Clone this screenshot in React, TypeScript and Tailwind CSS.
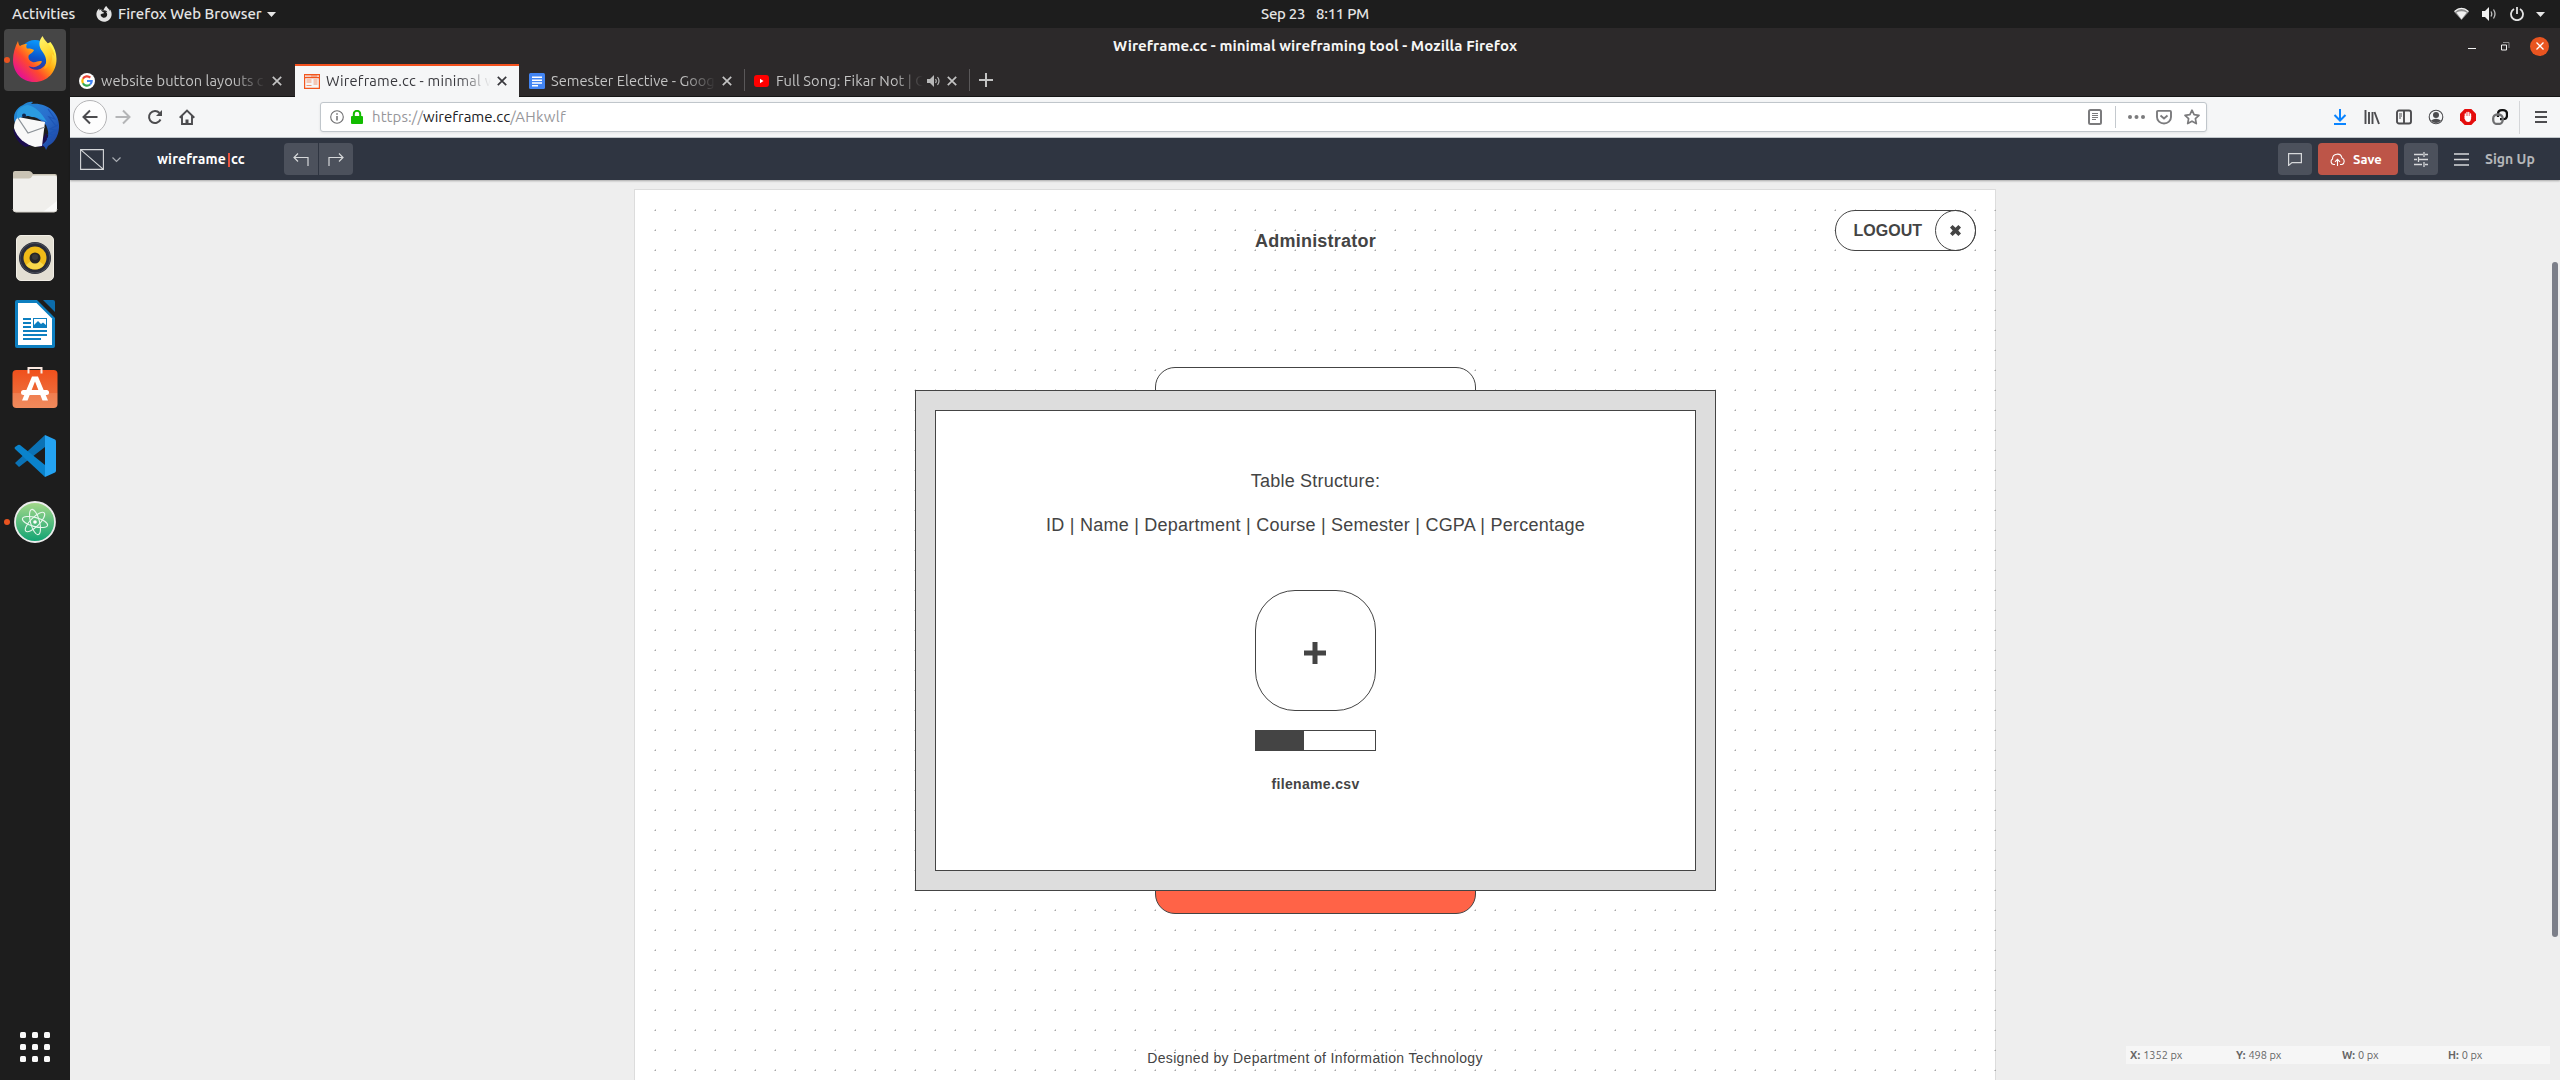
import type { ReactNode } from "react";
import { FaFirefoxBrowser } from "react-icons/fa";

const UI = "font-['Ubuntu','Noto_Sans',sans-serif]";
const ARIAL = "font-['Liberation_Sans',Arial,sans-serif]";

/* ---------- dock icons ---------- */

const FirefoxIcon = () => (
  <svg width="44" height="48" viewBox="0 0 44 48">
    <defs>
      <linearGradient id="ffBody" x1="0.85" y1="0.15" x2="0.15" y2="0.8">
        <stop offset="0" stopColor="#fff44f" />
        <stop offset="0.35" stopColor="#ffa80f" />
        <stop offset="0.65" stopColor="#ff4a2c" />
        <stop offset="1" stopColor="#e8158b" />
      </linearGradient>
      <linearGradient id="ffGlobe" x1="0.6" y1="0" x2="0.4" y2="1">
        <stop offset="0" stopColor="#0a9bff" />
        <stop offset="0.55" stopColor="#0a54c9" />
        <stop offset="1" stopColor="#45278d" />
      </linearGradient>
      <linearGradient id="ffFlame" x1="0.3" y1="0" x2="0.6" y2="1">
        <stop offset="0" stopColor="#fff36b" />
        <stop offset="0.6" stopColor="#ffd52b" />
        <stop offset="1" stopColor="#ff9a12" />
      </linearGradient>
    </defs>
    <circle cx="22" cy="20" r="16" fill="url(#ffGlobe)" />
    <path d="M5 5c.5 3 1 4 2 5 2-1.500 5-2 7-2-1 1.500-1 3 0 4.500 3-.2 6 .5 7 1.500-1 3-5 4-5.500 6-.5 3 1 5 4 6 3 .8 6-1.500 9-1 1 1-1 4-5 5.500-3 1.300-6 .5-8-.5 4 6 15 5 18-4 1.500-5-1-11-4-16l8-4c4 5 6 11 6 17 0 13-9 23-22 23S0 36 0 24C0 17 2 11 5 5z" fill="url(#ffBody)" />
    <path d="M29.500 0c-4 5-4 10-.5 15 4 5 6 11 2 18 6-2 9-8 8-15 1 .5 2 1.500 2.500 3C41 10 33 8 29.500 0z" fill="url(#ffFlame)" />
  </svg>
);

const ThunderbirdIcon = () => (
  <svg width="50" height="50" viewBox="0 0 50 50">
    <defs>
      <linearGradient id="tbBlue" x1="0" y1="0" x2="1" y2="1">
        <stop offset="0" stopColor="#1f8fd6" />
        <stop offset="0.5" stopColor="#2a6fcd" />
        <stop offset="1" stopColor="#1c3f9c" />
      </linearGradient>
    </defs>
    <path d="M3 28q2 12 12 18l8-2-8-12zM36 46l3-8-3-6-8 14z" fill="#1b0d4e" />
    <path d="M13 4C17 1 20 .5 23 1l-2 2c16-2 28 9 28 21 .5 8-3 17-11 21l-2 4c-1-3-2-4-4-5 7-5 8-11 4-20-4-4-9-8-16-9-7 0-12 2-15 7C2 14 6 7 13 4z" fill="url(#tbBlue)" />
    <path d="M4 27C4 23 5 19 8 16l27 5-3 24-7 1C15 43 7 37 4 27z" fill="#f8f8f8" />
    <path d="M8 17l10 15 17-6" fill="none" stroke="#8c9298" strokeWidth="1.300" />
    <path d="M8 18C5 12 8 6 17 4c8 1 14 7 20 17-6-3-10-5-15-5-6-2-10-2-14 2z" fill="#2b9be0" />
    <circle cx="14" cy="14.500" r="2" fill="#10264d" />
    <path d="M48 24l-8 4 6 1-7 4 5 1-7 4M38 8l7 10-6-2 7 9" fill="none" stroke="#1d55b5" strokeWidth="1.200" />
  </svg>
);

const FilesIcon = () => (
  <svg width="46" height="42" viewBox="0 0 46 42">
    <path d="M3 0h14q2 0 3 1.500L21 3h22q2 0 2 2v8H1V2q0-2 2-2z" fill="#c9c3b4" />
    <path d="M1 7.500h16q2 0 3-2l.5-1h22Q45 4.500 45 7v31q0 3-3 3H4q-3 0-3-3z" fill="#f0efec" />
    <path d="M45 30v8q0 3-3 3H31z" fill="#fafaf9" />
    <path d="M1 38q0 3 3 3h38q3 0 3-3" fill="none" stroke="#d5d2ca" />
  </svg>
);

const SpeakerIcon = () => (
  <svg width="38" height="46" viewBox="0 0 38 46">
    <rect x=".5" y=".5" width="37" height="45" rx="4.500" fill="#e3dfd3" stroke="#f1eee6" />
    <circle cx="19" cy="23" r="16" fill="#2a2d38" />
    <circle cx="19" cy="23" r="15" fill="none" stroke="#575b66" strokeWidth=".7" />
    <circle cx="19" cy="23" r="11.500" fill="#f0bb18" />
    <path d="M10 30a11.500 11.500 0 0 0 18 0l-5-4h-8z" fill="#f8d84b" />
    <circle cx="19" cy="23" r="5.500" fill="#262626" />
    <circle cx="19" cy="22" r="3" fill="#3a3a3a" />
  </svg>
);

const WriterIcon = () => (
  <svg width="40" height="48" viewBox="0 0 40 48">
    <path d="M2 0h20l18 18v28q0 2-2 2H2q-2 0-2-2V2Q0 0 2 0z" fill="#0d7fc0" />
    <path d="M28 0h10q2 0 2 2v10z" fill="#0c6cab" />
    <path d="M3 3h18.500L37 18.500V45H3z" fill="#fff" />
    <path d="M8 19h8M8 23h8M8 27h8M8 31h24M8 35h24M8 39h18" stroke="#0d7fc0" strokeWidth="2" />
    <rect x="18.500" y="18.500" width="13" height="9" fill="#fff" stroke="#0d7fc0" />
    <path d="M19 27v-2l4-4 3 3 2-1.500 3 2.500v2z" fill="#0d7fc0" />
  </svg>
);

const SoftwareIcon = () => (
  <svg width="46" height="42" viewBox="0 0 46 42" className="-translate-y-[2.500px]">
    <defs>
      <linearGradient id="swBag" x1="0" y1="0" x2="0" y2="1">
        <stop offset="0" stopColor="#f0501c" />
        <stop offset="0.6" stopColor="#ee6a38" />
        <stop offset="0.62" stopColor="#f07e50" />
        <stop offset="1" stopColor="#f08a5c" />
      </linearGradient>
    </defs>
    <rect x=".5" y="3.500" width="45" height="38" rx="4" fill="url(#swBag)" />
    <path d="M16.500 7V1.500h13V7" fill="none" stroke="#fbe9e0" strokeWidth="2" />
    <path d="M20 10h6l10 24h-5.500L23 15l-7.500 19H10z" fill="#fff" />
    <rect x="9" y="23.500" width="28" height="5" rx="2.500" fill="#fff" />
  </svg>
);

const CodeIcon = () => (
  <svg width="42" height="42" viewBox="0 0 42 42">
    <path d="M1 28l4 4 26-20V0z" fill="#0b72b5" />
    <path d="M1 14q-1-1 0-2l3-2q1-.6 2 0l25 20v12z" fill="#0a83cc" />
    <path d="M31 0l10 4.500q1 .5 1 2v29q0 1.500-1 2L31 42z" fill="#24a3f2" />
  </svg>
);

const AtomIcon = () => (
  <svg width="42" height="42" viewBox="0 0 42 42">
    <defs>
      <linearGradient id="atomBg" x1="0" y1="0" x2="0" y2="1">
        <stop offset="0" stopColor="#a6d98a" />
        <stop offset="1" stopColor="#0fa373" />
      </linearGradient>
    </defs>
    <circle cx="21" cy="21" r="20" fill="url(#atomBg)" stroke="#ececec" strokeWidth="1.800" />
    <g fill="none" stroke="#e9f7ee" strokeWidth="1.100">
      <ellipse cx="21" cy="21" rx="13" ry="4.500" transform="rotate(15 21 21)" />
      <ellipse cx="21" cy="21" rx="13" ry="4.500" transform="rotate(75 21 21)" />
      <ellipse cx="21" cy="21" rx="13" ry="4.500" transform="rotate(135 21 21)" />
    </g>
    <circle cx="21" cy="21" r="1.800" fill="#fff" />
  </svg>
);

/* ---------- small line icons ---------- */

type LineProps = { w?: number; h?: number; vb?: string; sw?: number; className?: string; children: ReactNode };
const Line = ({ w = 16, h = 16, vb = "0 0 16 16", sw = 1.8, className = "", children }: LineProps) => (
  <svg width={w} height={h} viewBox={vb} fill="none" stroke="currentColor" strokeWidth={sw} className={`shrink-0 ${className}`}>
    {children}
  </svg>
);

const CloseX = ({ className = "" }: { className?: string }) => (
  <Line w={10} h={10} vb="0 0 10 10" sw={1.7} className={className}>
    <path d="M.8.8l8.400 8.400M9.200.8L.8 9.200" />
  </Line>
);

const Caret = () => (
  <svg width="9" height="5" viewBox="0 0 9 5" className="shrink-0" fill="#e6e6e6">
    <path d="M0 0h9L4.500 5z" />
  </svg>
);

/* ---------- desktop chrome ---------- */

const TopBar = () => (
  <header className={`grid h-7 grid-cols-[1fr_auto_1fr] items-center bg-[#1d1d1d] text-[15px] font-medium text-[#e4e4e4] ${UI}`}>
    <div className="flex items-center pl-3">
      <span className="w-[84px] tracking-[-0.05px]">Activities</span>
      <FaFirefoxBrowser className="size-[16px] shrink-0" />
      <span className="ml-1.5 w-[149px] whitespace-nowrap">Firefox Web Browser</span>
      <Caret />
    </div>
    <div className="flex translate-x-[35px] gap-[11px] tracking-[-0.3px]">
      <span>Sep 23</span>
      <span>8:11 PM</span>
    </div>
    <div className="flex items-center justify-end pr-[15px]">
      <svg width="15" height="14" viewBox="0 0 16 14">
        <path d="M0 4.500Q8-3.500 16 4.500L8 13.500z" fill="#8e8e8e" />
        <path d="M2.500 5.500Q8 2.500 13.500 5.500L8 12.500z" fill="#f2f2f2" />
        <path d="M.6 4.400Q8-2.200 15.400 4.400" fill="none" stroke="#f2f2f2" strokeWidth="1.300" />
      </svg>
      <svg width="15" height="14" viewBox="0 0 15 14" className="ml-[13px]">
        <path d="M0 4h3l4-4v14l-4-4H0z" fill="#f2f2f2" />
        <path d="M9 4.500q1.500 2.500 0 5M11.500 2.500q3 4.500 0 9" fill="none" stroke="#bdbdbd" strokeWidth="1.300" />
      </svg>
      <Line w={14} h={14} vb="0 0 14 14" className="ml-[13px]" sw={1.8}>
        <path d="M7 0v7M4 2a6 6 0 1 0 6 0" />
      </Line>
      <span className="ml-3 flex"><Caret /></span>
    </div>
  </header>
);

type DockItem = { icon: ReactNode; dot?: boolean; active?: boolean };
const dock: DockItem[] = [
  { icon: <FirefoxIcon />, dot: true, active: true },
  { icon: <ThunderbirdIcon /> },
  { icon: <FilesIcon /> },
  { icon: <SpeakerIcon /> },
  { icon: <WriterIcon /> },
  { icon: <SoftwareIcon /> },
  { icon: <CodeIcon /> },
  { icon: <AtomIcon />, dot: true },
];

const Dock = () => (
  <nav className="flex w-[70px] shrink-0 flex-col items-center bg-[#1d1d1d] pt-px">
    <div className="flex flex-col gap-1">
      {dock.map((d, i) => (
        <div key={i} className={`relative flex h-[62px] w-[62px] items-center justify-center rounded-[4px] ${d.active ? "bg-[#464646]" : ""}`}>
          {d.icon}
          {d.dot && <span className="absolute left-0 top-[28px] size-[6px] rounded-full bg-[#e95420]" />}
        </div>
      ))}
    </div>
    <div className="mb-[18px] mt-auto grid grid-cols-3 gap-[6px]">
      {Array.from({ length: 9 }, (_, i) => (
        <span key={i} className="size-[6px] rounded-[1.5px] bg-[#fafafa]" />
      ))}
    </div>
  </nav>
);

/* ---------- browser ---------- */

const TitleBar = () => (
  <div className="relative flex h-[36px] items-center justify-center">
    <span className="text-[15px] font-bold tracking-[0.08px] text-[#f6f6f5]">Wireframe.cc - minimal wireframing tool - Mozilla Firefox</span>
    <div className="absolute right-[11px] top-[8px] flex h-5 items-center">
      <span className="mt-[5px] h-px w-2 bg-[#f2f2f2]" />
      <Line w={9} h={9} vb="0 0 9 9" sw={1} className="ml-[25px] mr-[20px] text-[#f2f2f2]">
        <path d="M.5 3h5v5h-5z" />
        <path d="M2 .5h6V6" stroke="#8a8a8a" />
      </Line>
      <span className="flex size-[19px] items-center justify-center rounded-full bg-[#e95420] text-white">
        <Line w={8} h={8} vb="0 0 8 8" sw={1.3}><path d="M.5.5l7 7M7.500.5l-7 7" /></Line>
      </span>
    </div>
  </div>
);

const TabTitle = ({ className, children }: { className: string; children: ReactNode }) => (
  <span className={`overflow-hidden whitespace-nowrap mask-r-from-80% ${className}`}>{children}</span>
);

const TabBar = () => (
  <div className="flex h-[33px] items-stretch border-b border-[#151515] text-[14.67px] text-[#c3c3c3]">
    <div className="flex w-[225px] items-center pl-[9px] pt-px">
      <svg width="16" height="16" viewBox="0 0 16 16" className="shrink-0">
        <circle cx="8" cy="8" r="8" fill="#fff" />
        <g fill="none" strokeWidth="2.200">
          <path d="M11.300 4.600A4.700 4.700 0 0 0 3.900 5.800" stroke="#ea4335" />
          <path d="M3.900 5.800a4.700 4.700 0 0 0 0 4.400" stroke="#fbbc05" />
          <path d="M3.900 10.200a4.700 4.700 0 0 0 7.200 1.300" stroke="#34a853" />
          <path d="M11.100 11.500A4.700 4.700 0 0 0 12.700 8H8" stroke="#4285f4" />
        </g>
      </svg>
      <TabTitle className="ml-1.5 w-[165px] tracking-[0.05px]">website button layouts c</TabTitle>
      <CloseX className="ml-[6px]" />
    </div>
    <div className="-mb-px flex w-[224px] items-center border-t-2 border-[#f4511e] bg-[#f5f6f7] pb-px pl-[9px] text-[#38383d]">
      <Line w={16} h={15} vb="0 0 16 15" sw={1.2} className="text-[#f2561d]">
        <path d="M.6.6h14.800v13.800H.6zM.6 3.600h14.800" />
        <path d="M2.500 2h1M4.500 2h1M6.500 2h7" />
        <path d="M2.500 6h5M2.500 8h5M9.500 6h4M9.500 8h4M9.500 10h4M2.500 11.500h5" strokeOpacity=".6" />
      </Line>
      <TabTitle className="ml-1.5 w-[165px] tracking-[0.2px]">Wireframe.cc - minimal w</TabTitle>
      <CloseX className="ml-[6px]" />
    </div>
    <div className="flex w-[225px] items-center pl-[10px] pt-px">
      <svg width="16" height="16" viewBox="0 0 16 16" className="shrink-0">
        <rect width="16" height="16" rx="1.500" fill="#4285f4" />
        <path d="M3 4.200h10M3 7.200h10M3 10h10M3 12.700h6" stroke="#fff" strokeWidth="1.400" />
      </svg>
      <TabTitle className="ml-1.5 w-[165px] tracking-[0.02px]">Semester Elective - Goog</TabTitle>
      <CloseX className="ml-[6px]" />
    </div>
    <div className="my-[5px] flex w-[226px] items-center border-x border-[#5a5859] pl-[9px] pt-px">
      <svg width="15" height="12" viewBox="0 0 15 12" className="shrink-0">
        <rect width="15" height="12" rx="3" fill="#f00" />
        <path d="M6 3.800v4.400L9.500 6z" fill="#fff" />
      </svg>
      <TabTitle className="ml-[7px] w-[147px] tracking-[0.08px]">Full Song: Fikar Not | O</TabTitle>
      <svg width="14" height="12" viewBox="0 0 14 12" className="ml-[4px] shrink-0">
        <path d="M0 4h3l4-4v12L3 8H0z" fill="#b8b8b8" />
        <path d="M8.500 4q1.500 2 0 4M10.500 2q3 4 0 8" fill="none" stroke="#b8b8b8" strokeWidth="1.200" />
      </svg>
      <CloseX className="ml-[6px]" />
    </div>
    <div className="flex items-center pl-[9px]">
      <Line w={14} h={14} vb="0 0 14 14" sw={2}><path d="M7 0v14M0 7h14" /></Line>
    </div>
  </div>
);

const NavBar = () => (
  <div className="flex h-[41px] items-center border-b border-[#c4cacf] bg-[#f5f6f7] text-[#4c4c4f]">
    <span className="ml-[3px] flex size-[34px] items-center justify-center rounded-full border border-[#b4b4b6] bg-[#fdfdfd]">
      <Line sw={2}><path d="M15.500 8H1.500M8 1.500L1.500 8 8 14.500" /></Line>
    </span>
    <Line sw={2} className="ml-2 text-[#b4b5b7]"><path d="M.5 8h14M8 1.500L14.500 8 8 14.500" /></Line>
    <Line sw={2} className="ml-4"><path d="M13.500 10.500A6 6 0 1 1 12.500 4" /><path d="M15 1v6H9z" fill="currentColor" stroke="none" /></Line>
    <Line sw={1.9} className="ml-4"><path d="M.7 8.700L8 1.500l7.300 7.200M3 7v8h10V7" /><path d="M8 15v-4.500" strokeWidth="3" /></Line>

    <div className="ml-[125px] flex h-[30px] w-[1887px] items-center rounded-[3px] border border-[#c0c6cb] bg-white shadow-[0_1px_3px_rgba(0,0,0,0.08)]">
      <Line w={14} h={14} vb="0 0 14 14" sw={1.1} className="ml-[9px] text-[#6e6e70]">
        <circle cx="7" cy="7" r="6.300" /><path d="M7 6v4.500M7 3.300v1.500" strokeWidth="1.500" />
      </Line>
      <svg width="12" height="14" viewBox="0 0 12 14" className="ml-[7px] shrink-0">
        <path d="M2.800 7V4a3.200 3.200 0 0 1 6.400 0v3" fill="none" stroke="#12bc00" strokeWidth="2" />
        <rect y="6" width="12" height="8" rx="1" fill="#12bc00" />
      </svg>
      <span className="ml-[9px] whitespace-nowrap pt-px text-[15px] text-[#96969a]">
        <span className="tracking-[0.08px]">https://</span>
        <span className="text-[#202023]">wireframe.cc</span>
        <span className="tracking-[0.25px]">/AHkwlf</span>
      </span>
      <div className="ml-auto flex items-center pr-[6px] text-[#7b7b7d]">
        <Line w={14} h={16} vb="0 0 14 16" sw={2}>
          <rect x="1" y="1" width="12" height="14" rx="1.500" />
          <path d="M4 4.500h6M4 6.500h6M4 8.500h6M4 10.500h4" strokeWidth="1" />
        </Line>
        <span className="ml-[13px] h-[22px] w-px bg-[#c4c9ce]" />
        <svg width="17" height="4" viewBox="0 0 17 4" fill="currentColor" className="ml-[12px]">
          <circle cx="2" cy="2" r="2" /><circle cx="8.500" cy="2" r="2" /><circle cx="15" cy="2" r="2" />
        </svg>
        <Line className="ml-[11px]" sw={1.9}>
          <path d="M2 1.900h12q1 0 1 1V8A7 6.500 0 0 1 1 8V2.900q0-1 1-1z" /><path d="M4.500 6.500L8 9.500l3.500-3" />
        </Line>
        <Line className="ml-[12px]" sw={1.7}>
          <path strokeLinejoin="round" d="M8 1.200l2.100 4.500 4.900.6-3.600 3.400.9 4.900L8 12.200l-4.300 2.400.9-4.900L1 6.300l4.900-.6z" />
        </Line>
      </div>
    </div>

    <div className="ml-auto flex h-full items-center">
      <Line className="text-[#0a84ff]" sw={2}><path d="M8 0v11M2.500 6L8 11.500 13.500 6M2 15h12" /></Line>
      <Line className="ml-4" sw={1.9}><path d="M1.500 1v14M5 3v12M8.500 3v12M10.500 3l4.500 12" /></Line>
      <Line className="ml-4" sw={1.9}><rect x="1" y="1.500" width="14" height="13" rx="2" /><path d="M8 1v14" /><path d="M3 5h3M3 7h3M3 9h2" strokeWidth="1" /></Line>
      <Line className="ml-4" sw={1.1}>
        <circle cx="8" cy="8" r="6.800" />
        <circle cx="8" cy="6" r="3" fill="currentColor" stroke="none" />
        <path d="M3 11.500q5-3.500 10 0-2 2.500-5 2.500t-5-2.500z" fill="currentColor" stroke="none" />
      </Line>
      <svg width="16" height="16" viewBox="0 0 16 16" className="ml-4 shrink-0">
        <path d="M4.700 0h6.600L16 4.700v6.600L11.300 16H4.700L0 11.300V4.700z" fill="#e40d0d" />
        <path d="M5.300 8V5M7 8V3.500M8.800 8V3.500M10.500 8V5" stroke="#fff" strokeWidth="1.300" strokeLinecap="round" />
        <path d="M4.700 7h6.400v2.500q-.4 3.500-2.900 3.500T4.500 9.500z" fill="#fff" />
      </svg>
      <Line className="ml-4" sw={2.3}>
        <path d="M6 8V5q0-3.800 4-3.800h1q4 0 4 4v1q0 4-4 4H8" stroke="#111" />
        <rect x="1.200" y="5.500" width="9.500" height="9.500" rx="4" stroke="#6f7072" />
      </Line>
      <span className="ml-[11px] h-[33px] w-px bg-[#d4d6d9]" />
      <Line w={12} h={14} vb="0 0 12 14" className="ml-[15px] mr-[13px]" sw={2}><path d="M0 2h12M0 7h12M0 12h12" /></Line>
    </div>
  </div>
);

/* ---------- wireframe application ---------- */

const AppBar = () => (
  <div className="relative z-10 flex h-[42px] shrink-0 items-center bg-[#2f3541] text-[#d6d8da] shadow-[0_1px_2px_rgba(0,0,0,0.3)]">
    <Line w={24} h={21} vb="0 0 24 21" sw={1.1} className="ml-[10px]"><path d="M.6.6h22.800v19.800H.6zM.6.6l22.800 19.800" /></Line>
    <Line w={9} h={6} vb="0 0 9 6" sw={1.2} className="ml-[8px] mt-px text-[#a9adb3]"><path d="M.5.5l4 4 4-4" /></Line>
    <div className="ml-[36px] flex w-[127px] items-center pt-px text-[14px] font-bold text-white">
      <span className="tracking-[0.15px]">wireframe</span>
      <span className="mx-[1.5px] h-[14px] w-[2px] bg-[#e8533f]" />
      <span>cc</span>
    </div>
    <div className="flex gap-px">
      <span className="flex h-8 w-[34px] items-center justify-center rounded-l-[4px] bg-[#4c515c]">
        <Line w={16} h={13} vb="0 0 16 13" sw={1.2}><path d="M15 13V4.500H1M5 .5l-4 4 4 4" /></Line>
      </span>
      <span className="flex h-8 w-[34px] items-center justify-center rounded-r-[4px] bg-[#4c515c]">
        <Line w={16} h={13} vb="0 0 16 13" sw={1.2}><path d="M1 13V4.500h14M11 .5l4 4-4 4" /></Line>
      </span>
    </div>
    <div className="ml-auto flex items-center">
      <span className="flex h-8 w-[34px] items-center justify-center rounded-[4px] bg-[#4c515c]">
        <Line w={14} h={13} vb="0 0 14 13" sw={1.2}><path d="M.6.6h12.800v9H4L.6 12.400z" /></Line>
      </span>
      <span className="ml-1.5 flex h-8 w-[80px] items-center rounded-[4px] bg-[#bd5548] pl-3 text-white">
        <Line w={15} h={13} vb="0 0 15 13" sw={1.1}>
          <path d="M5 11.500H3.500A3 3 0 0 1 2.500 6 4.800 4.800 0 0 1 12 5a3.500 3.500 0 0 1 0 6.500h-2M7.500 13V6.500M5 8.800l2.500-2.500L10 8.800" />
        </Line>
        <span className="ml-2 pt-px text-[13px] font-bold">Save</span>
      </span>
      <span className="ml-1.5 flex h-8 w-[34px] items-center justify-center rounded-[4px] bg-[#4c515c]">
        <Line w={14} h={15} vb="0 0 14 15" sw={1.3}><path d="M0 2.500h9M11 2.500h3M10 0v5M0 7.500h3M5 7.500h9M4.500 5v5M0 12.500h8M11 12.500h3M10 10v5" /></Line>
      </span>
      <Line w={15} h={13} vb="0 0 15 13" sw={1.3} className="ml-4"><path d="M0 1h15M0 6.500h15M0 12h15" /></Line>
      <span className="ml-4 mr-[25px] w-[50px] whitespace-nowrap pt-px text-[14px] font-bold text-[#b4b6b9]">Sign Up</span>
    </div>
  </div>
);

const DotGrid = () => (
  <svg className="absolute left-[19px] top-[19px] h-[870px] w-[1343px]">
    <defs>
      <pattern id="dots" width="20" height="20" patternUnits="userSpaceOnUse">
        <rect x="1" y="1" width="1" height="1" fill="#a8a8a8" />
        <rect x="1" y="0" width="1" height="1" fill="#d2d2d2" />
        <rect x="0" y="1" width="1" height="1" fill="#d2d2d2" />
      </pattern>
    </defs>
    <rect width="1343" height="870" fill="url(#dots)" />
  </svg>
);

/* The page is a free canvas: every shape keeps the place it was drawn at. */
const Page = () => (
  <main className={`relative mt-[9px] h-[900px] w-[1362px] border border-[#dcdcdc] bg-white text-[#444] ${ARIAL}`}>
    <DotGrid />
    <h1 className="absolute left-[580px] top-[39px] w-[200px] pl-px text-center text-[18px] font-bold leading-6 tracking-[0.23px]">Administrator</h1>

    <div className="absolute left-[1200px] top-[20px] flex h-[41px] w-[141px] items-center justify-end rounded-[20px] border border-[#444] bg-white">
      <span className="mr-[13px] text-[16px] font-bold">LOGOUT</span>
      <span className="-mr-px flex size-[41px] items-center justify-center rounded-full border border-[#444]">
        <svg width="11" height="11" viewBox="0 0 11 11" fill="#444">
          <path d="M2.600 0L5.500 2.700 8.400 0 11 2.600 8.300 5.500 11 8.400 8.400 11 5.500 8.300 2.600 11 0 8.400 2.700 5.500 0 2.600z" />
        </svg>
      </span>
    </div>

    <div className="absolute left-[520px] top-[177px] h-[81px] w-[321px] rounded-[20px] border border-[#444] bg-white" />
    <div className="absolute left-[520px] top-[643px] h-[81px] w-[321px] rounded-[20px] border border-[#444] bg-[#ff6347]" />

    <section className="absolute left-[280px] top-[200px] h-[501px] w-[801px] border border-[#444] bg-[#ddd] p-[19px]">
      <div className="flex h-[461px] flex-col items-center border border-[#444] bg-white pt-[59px]">
        <p className="text-[18px] leading-[22px] tracking-[0.2px]">Table Structure:</p>
        <p className="mt-[22px] text-[18px] leading-[22px] tracking-[0.24px]">ID | Name | Department | Course | Semester | CGPA | Percentage</p>
        <div className="mt-[54px] flex size-[121px] items-center justify-center rounded-[40px] border border-[#444]">
          <svg width="22" height="22" viewBox="0 0 22 22" className="mr-px mt-[5px]"><path d="M11 0v22M0 11h22" stroke="#444" strokeWidth="5" /></svg>
        </div>
        <div className="mt-[19px] h-[21px] w-[121px] border border-[#444]">
          <div className="h-full w-[48px] bg-[#444]" />
        </div>
        <p className="mt-[23px] text-[14px] font-bold leading-5 tracking-[0.33px]">filename.csv</p>
      </div>
    </section>

    <p className="absolute left-[480px] top-[858px] w-[400px] text-center text-[14px] leading-5 tracking-[0.35px]">Designed by Department of Information Technology</p>
  </main>
);

const stats = [
  ["X:", "1352 px"],
  ["Y:", "498 px"],
  ["W:", "0 px"],
  ["H:", "0 px"],
];

const StatusBox = () => (
  <div className="absolute bottom-[16px] right-[10px] grid h-[18px] w-[424px] grid-cols-4 items-center bg-[#f6f6f6] text-[11px] text-[#666]">
    {stats.map(([k, v]) => (
      <span key={k} className="pl-1">
        <b className="mr-[3px]">{k}</b>{v}
      </span>
    ))}
  </div>
);

export default function App() {
  return (
    <div className="flex h-[1080px] w-[2560px] flex-col overflow-hidden bg-[#1d1d1d]">
      <TopBar />
      <div className="flex min-h-0 flex-1">
        <Dock />
        <div className={`flex min-w-0 flex-1 flex-col bg-[#2c292a] ${UI}`}>
          <TitleBar />
          <TabBar />
          <NavBar />
          <AppBar />
          <div className="relative flex min-h-0 flex-1 justify-center overflow-hidden bg-[#eee]">
            <Page />
            <StatusBox />
            <span className="absolute right-[2px] top-[82px] h-[675px] w-[6px] rounded-full bg-[#7c7f89]" />
          </div>
        </div>
      </div>
    </div>
  );
}
